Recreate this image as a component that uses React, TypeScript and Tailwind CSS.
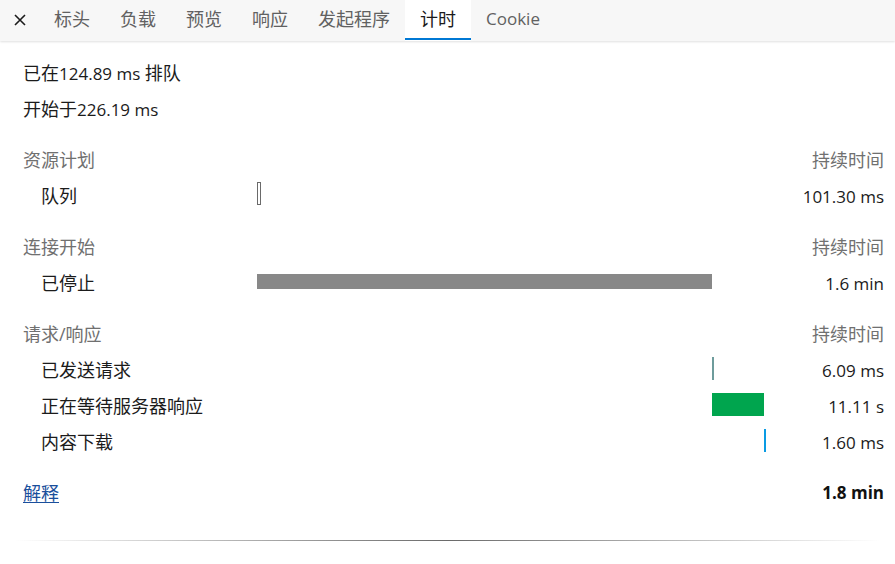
import React from "react";

const L = ({ children }: { children: React.ReactNode }) => (
  <span className="text-[17px]">{children}</span>
);

const tabs = ["标头", "负载", "预览", "响应", "发起程序", "计时", "Cookie"];

function Row({
  label,
  duration,
  children,
}: {
  label: string;
  duration: string;
  children?: React.ReactNode;
}) {
  return (
    <div className="flex h-[36px] items-center">
      <div className="w-[234px] shrink-0 pl-[18px] text-[#1b1b1b]">{label}</div>
      <div className="relative h-[36px] flex-1">{children}</div>
      <div className="w-[120px] shrink-0 text-right text-[#1b1b1b]">
        <L>{duration}</L>
      </div>
    </div>
  );
}

function Header({ title }: { title: string }) {
  return (
    <div className="mt-[15px] flex h-[36px] items-center justify-between text-[#707070]">
      <span>{title}</span>
      <span>持续时间</span>
    </div>
  );
}

export default function App() {
  return (
    <div
      className="min-h-[564px] w-[895px] bg-white text-[18px]"
      style={{ fontFamily: '"Open Sans", "Noto Sans CJK SC", sans-serif' }}
    >
      <div className="relative flex h-[41px] items-stretch bg-[#f7f7f7] shadow-[0_1px_2px_rgba(0,0,0,0.12)]">
        <div className="flex w-[39px] items-center pb-[2px] pl-[14px]">
          <svg width="12" height="12" viewBox="0 0 12 12">
            <path d="M1 1L11 11M11 1L1 11" stroke="#1b1b1b" strokeWidth="1.6" />
          </svg>
        </div>
        {tabs.map((t) => {
          const active = t === "计时";
          return (
            <div
              key={t}
              className={
                active
                  ? "relative flex items-center bg-white px-[15px] pb-[3px] text-[#1b1b1b]"
                  : "relative flex items-center px-[15px] pb-[3px] text-[#616161]"
              }
            >
              {t === "Cookie" ? <L>{t}</L> : t}
              {active && (
                <div className="absolute bottom-[1px] left-0 right-0 h-[2px] bg-[#0078d4]" />
              )}
            </div>
          );
        })}
      </div>

      <div className="pl-[23px] pr-[11px] pt-[14px]">
        <div className="flex h-[36px] items-center text-[#1b1b1b]">
          <span>
            已在<L>124.89 ms </L>排队
          </span>
        </div>
        <div className="flex h-[36px] items-center text-[#1b1b1b]">
          <span>
            开始于<L>226.19 ms</L>
          </span>
        </div>

        <Header title="资源计划" />
        <Row label="队列" duration="101.30 ms">
          <div className="absolute left-0 top-[4px] h-[23px] w-[4px] border border-[#6a6a6a] bg-white" />
        </Row>

        <Header title="连接开始" />
        <Row label="已停止" duration="1.6 min">
          <div className="absolute left-0 top-[9px] h-[15px] w-[455px] bg-[#888888]" />
        </Row>

        <Header title="请求/响应" />
        <Row label="已发送请求" duration="6.09 ms">
          <div className="absolute left-[455px] top-[5px] h-[23px] w-[2px] bg-[#6e9c9c]" />
        </Row>
        <Row label="正在等待服务器响应" duration="11.11 s">
          <div className="absolute left-[455px] top-[5px] h-[23px] w-[52px] bg-[#00a54e]" />
        </Row>
        <Row label="内容下载" duration="1.60 ms">
          <div className="absolute left-[507px] top-[5px] h-[23px] w-[1.5px] bg-[#0a9be3]" />
        </Row>

        <div className="mt-[15px] flex h-[36px] items-center justify-between">
          <a className="text-[#1a4f9c] underline underline-offset-2" href="#">
            解释
          </a>
          <span className="text-[17px] font-bold text-[#111]">1.8 min</span>
        </div>
      </div>

      <div className="mx-[15px] mt-[29px] h-px bg-linear-to-r from-transparent via-[#6a6a6a] to-transparent" />
    </div>
  );
}
